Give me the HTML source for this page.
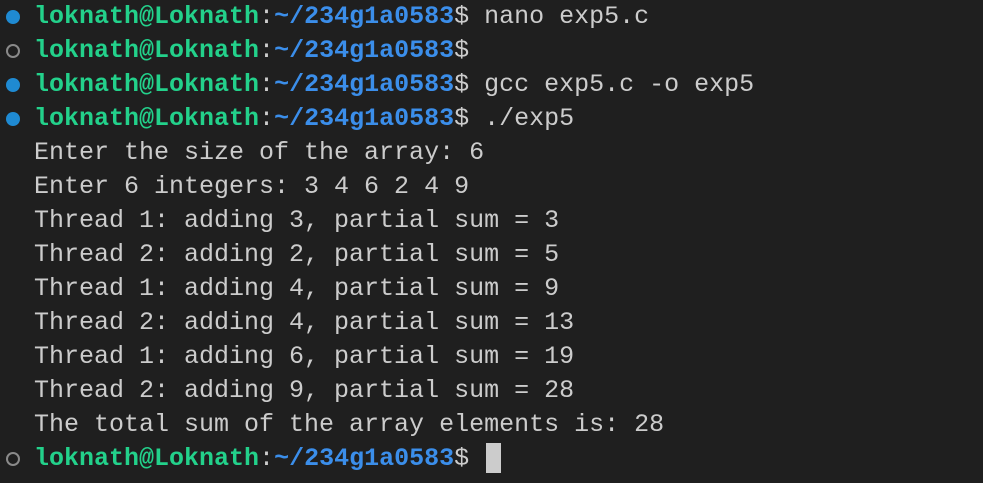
<!DOCTYPE html><html><head><style>
body{margin:0;background:#1f1f1f;width:983px;height:483px;overflow:hidden}
.t{position:absolute;left:34px;top:0;font-family:"Liberation Mono",monospace;font-size:25px;color:#cccccc}
.l{height:34px;line-height:34px;position:relative;white-space:pre}
.g{color:#23d18b;font-weight:bold}.b{color:#3b8eea;font-weight:bold}
.d{position:absolute;left:-28px;top:10px;width:14px;height:14px;border-radius:50%;background:#1f8ad2}
.o{background:none;border:2px solid #8a8a8a;width:10px;height:10px}
.c{display:inline-block;width:15px;height:30px;background:#cccccc;vertical-align:middle;margin-left:2px}
</style></head><body><div class="t"><div class="l"><span class="d"></span><span class="g">loknath@Loknath</span>:<span class="b">~/234g1a0583</span>$ nano exp5.c</div><div class="l"><span class="d o"></span><span class="g">loknath@Loknath</span>:<span class="b">~/234g1a0583</span>$</div><div class="l"><span class="d"></span><span class="g">loknath@Loknath</span>:<span class="b">~/234g1a0583</span>$ gcc exp5.c -o exp5</div><div class="l"><span class="d"></span><span class="g">loknath@Loknath</span>:<span class="b">~/234g1a0583</span>$ ./exp5</div><div class="l">Enter the size of the array: 6</div><div class="l">Enter 6 integers: 3 4 6 2 4 9</div><div class="l">Thread 1: adding 3, partial sum = 3</div><div class="l">Thread 2: adding 2, partial sum = 5</div><div class="l">Thread 1: adding 4, partial sum = 9</div><div class="l">Thread 2: adding 4, partial sum = 13</div><div class="l">Thread 1: adding 6, partial sum = 19</div><div class="l">Thread 2: adding 9, partial sum = 28</div><div class="l">The total sum of the array elements is: 28</div><div class="l"><span class="d o"></span><span class="g">loknath@Loknath</span>:<span class="b">~/234g1a0583</span>$ <span class="c"></span></div></div></body></html>
